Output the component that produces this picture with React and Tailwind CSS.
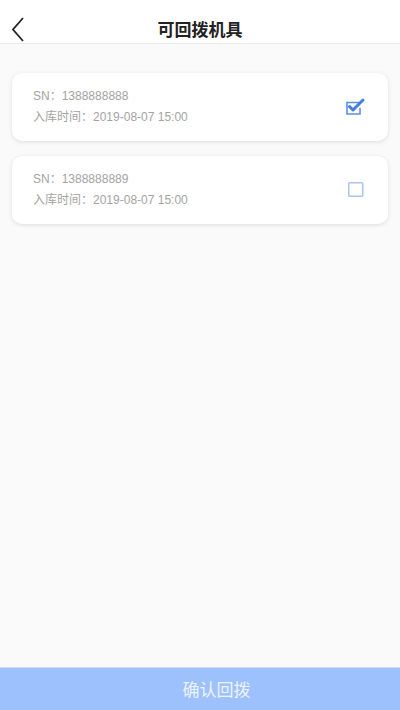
import { useState } from 'react';

const font = { fontFamily: '"Liberation Sans", "Noto Sans CJK SC", sans-serif' };

const items = [
  { sn: '1388888888', time: '2019-08-07 15:00' },
  { sn: '1388888889', time: '2019-08-07 15:00' },
];

function CheckIcon({ checked }) {
  if (!checked) {
    return (
      <svg width="20" height="20" viewBox="0 0 20 20">
        <rect x="2.75" y="2.75" width="14" height="13.5" rx="1" fill="none" stroke="#a9c4ee" strokeWidth="1.5" />
      </svg>
    );
  }
  return (
    <svg width="22" height="20" viewBox="0 0 22 20">
      <path d="M15 5.5 H3 V17 H16 V11" fill="none" stroke="#5b8fe0" strokeWidth="1.6" />
      <path d="M5.5 9.5 L9 13 L19 3" fill="none" stroke="#3f7fe0" strokeWidth="3" strokeLinecap="round" strokeLinejoin="round" />
    </svg>
  );
}

export default function App() {
  const [selected, setSelected] = useState([0]);

  const toggle = (i) =>
    setSelected((s) => (s.includes(i) ? s.filter((x) => x !== i) : [...s, i]));

  return (
    <div className="w-[400px] h-[710px] flex flex-col bg-[#fafafa]" style={font}>
      {/* header */}
      <div className="h-[44px] flex items-start relative bg-white border-b border-[#ececec] shrink-0">
        <button className="absolute left-[10px] top-[15px]">
          <svg width="16" height="28" viewBox="0 0 16 28">
            <path d="M13 3 L3 14.5 L13 26" fill="none" stroke="#222" strokeWidth="1.8" />
          </svg>
        </button>
        <div className="flex-1 text-center text-[17px] font-semibold text-[#222] pt-[19px] leading-[24px]">可回拨机具</div>
      </div>

      {/* list */}
      <div className="flex-1 px-[12px] pt-[29px] flex flex-col gap-[15px]">
        {items.map((it, i) => (
          <div
            key={it.sn}
            onClick={() => toggle(i)}
            className="h-[68px] bg-white rounded-[10px] shadow-[0_1px_4px_rgba(0,0,0,0.12)] flex items-center pl-[21px] pr-[22px]"
          >
            <div className="flex-1 flex flex-col gap-[6px] text-[12px] text-[#a3a3a3] leading-[15px]">
              <div>SN：{it.sn}</div>
              <div>入库时间：{it.time}</div>
            </div>
            <CheckIcon checked={selected.includes(i)} />
          </div>
        ))}
      </div>

      {/* bottom button */}
      <button className="h-[43px] shrink-0 bg-[#9dc1fd] text-[#eef4ff] text-[17px] pl-[33px] pt-[4px] border-t border-[#c9dcfb]">
        确认回拨
      </button>
    </div>
  );
}
